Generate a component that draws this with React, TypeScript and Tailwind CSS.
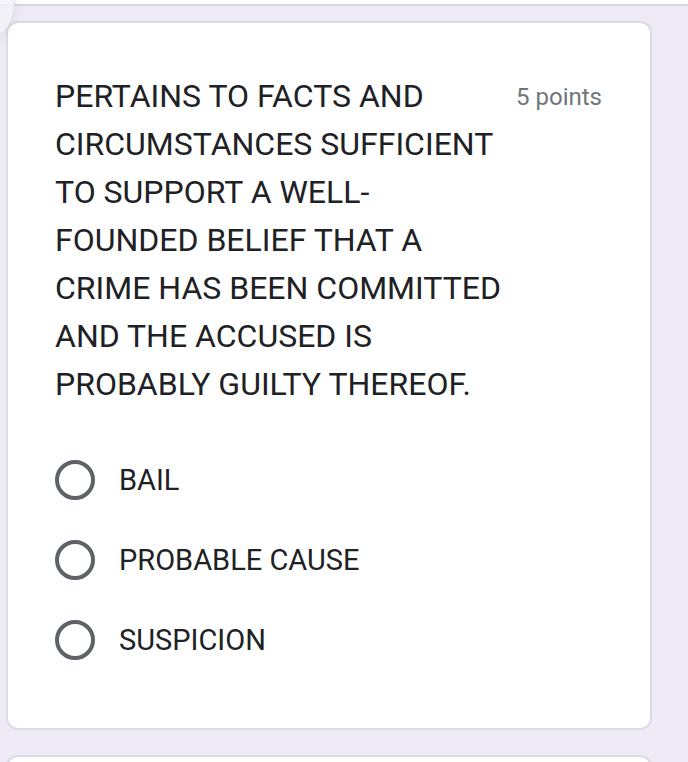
export default function App() {
  const options = ['BAIL', 'PROBABLE CAUSE', 'SUSPICION'];
  return (
    <div
      className="relative min-h-[762px] w-[688px] overflow-hidden bg-[#eeeaf6]"
      style={{ fontFamily: 'Roboto, "Noto Sans", sans-serif' }}
    >
      {/* bottom of the previous card */}
      <div className="h-[6px] bg-white border-b-2 border-[#d8d6de]" />

      <div className="pl-[6px] pr-[36px] pt-[15px]">
        <div className="rounded-[12px] border-2 border-[#dcdbe0] bg-white pl-[47px] pr-[48px] pt-[49px] pb-[68px]">
          <div className="flex items-start justify-between">
            <p className="w-[455px] text-[32px] leading-[48px] text-[#202124]">
              PERTAINS TO FACTS AND CIRCUMSTANCES SUFFICIENT TO SUPPORT A WELL-FOUNDED BELIEF THAT A CRIME HAS BEEN
              COMMITTED AND THE ACCUSED IS PROBABLY GUILTY THEREOF.
            </p>
            <span className="mt-[9px] text-[24px] leading-[32px] text-[#70757a]">5 points</span>
          </div>

          <div className="mt-[52px] flex flex-col gap-[40px]">
            {options.map((o) => (
              <label key={o} className="flex items-center gap-[24px]">
                <span className="h-[40px] w-[40px] rounded-full border-[4px] border-[#5f6368]" />
                <span className="text-[29px] leading-[40px] text-[#202124]">{o}</span>
              </label>
            ))}
          </div>
        </div>

        <div className="mt-[25px] h-[40px] rounded-t-[12px] border-2 border-b-0 border-[#dcdbe0] bg-white" />
      </div>

      {/* floating button peeking in at the corner */}
      <div className="absolute -left-[65px] -top-[35px] h-[80px] w-[80px] rounded-full border border-[#dddbe3] bg-[#f4f2f9]/80 shadow-[0_0_14px_rgba(0,0,0,0.07)]" />
    </div>
  );
}
